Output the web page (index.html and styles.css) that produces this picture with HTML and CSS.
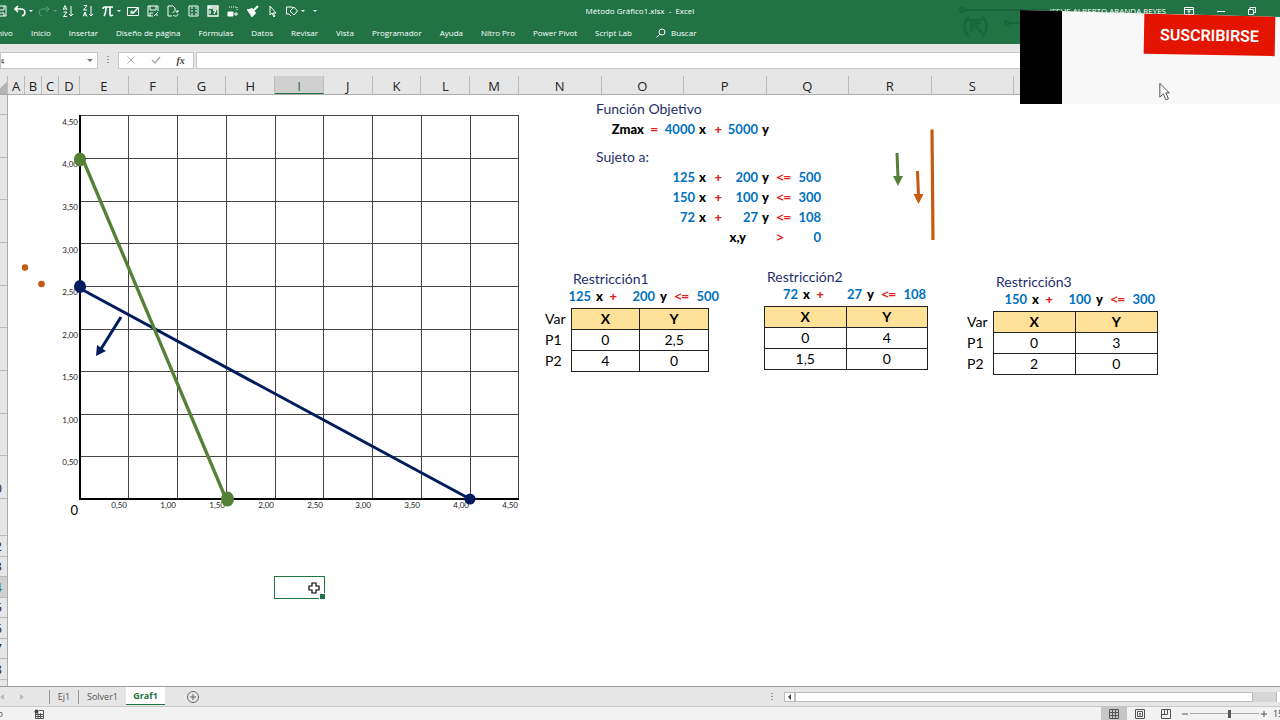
FILE: index.html
```html
<!DOCTYPE html>
<html lang="es">
<head>
    <meta charset="UTF-8" />
    <meta name="viewport" content="width=device-width, initial-scale=1" />
    <title>Método Gráfico1.xlsx - Excel</title>
    <link rel="stylesheet" href="styles.css">
</head>
<body>
    <header class="ribbon">
        <svg class="circuit" width="100" height="44" viewBox="0 0 100 44" aria-hidden="true">
            <g fill="none" stroke="#185c37" stroke-width="2">
                <circle cx="7" cy="10" r="2" /><path d="M9 10h90" />
                <circle cx="52" cy="23" r="2" /><path d="M54 23h46" />
                <path stroke-width="2.500" d="M14 17a12 12 0 0 0 0 19M27 17a12 12 0 0 1 0 19M16 21v11M27 33l-9-10M18 31v-8h8M13 20h14" />
            </g>
        </svg>
        <div class="title-row">
            <div class="qat">
                <button aria-label="Guardar"><svg width="12" height="12" viewBox="0 0 12 12"><path d="M1 1h10v10H1zM3 1v4h6V1M3 11V8h6v3" /></svg></button>
                <button class="split" aria-label="Deshacer"><svg width="12" height="12" viewBox="0 0 12 12"><path stroke-width="1.6" d="M4 1L1 4l3 3M1 4h6c5 0 5 6 1 7" /></svg><i class="caret"></i></button>
                <button class="split dim" aria-label="Rehacer"><svg width="12" height="12" viewBox="0 0 12 12"><path d="M8 1l3 3-3 3M11 4H5C0 4 0 10 4 11" /></svg><i class="caret"></i></button>
                <button aria-label="Orden ascendente"><svg width="12" height="12" viewBox="0 0 12 12"><path d="M0 5l2-4.500L4 5M1 4h2M.5 7H4L.5 11.500H4M8 1v10M6 9l2 2 2-2" /></svg></button>
                <button aria-label="Orden descendente"><svg width="12" height="12" viewBox="0 0 12 12"><path d="M.5.500H4L.5 5H4M0 11.500L2 7l2 4.500M1 10h2M8 1v10M6 9l2 2 2-2" /></svg></button>
                <button class="split" aria-label="Ecuación"><svg width="12" height="12" viewBox="0 0 12 12"><path stroke-width="1.6" d="M1 4c0-2 1-2 2-2h8M4 2c0 4 0 6-2 9M8 2v7c0 2 1 2 3 1" /></svg><i class="caret"></i></button>
                <button aria-label="Casilla"><svg width="12" height="12" viewBox="0 0 12 12"><path d="M.5 2.500h11v8H.5zM3 8h2" /><path stroke-width="1.6" d="M4 6l2 2 5-5" /></svg></button>
                <button aria-label="Guardar como"><svg width="12" height="12" viewBox="0 0 12 12"><path d="M6 11H1V1h10v5M3 1v4h6V1M3 11V8h3M7 11l4-4M10 9v2" /></svg></button>
                <button aria-label="Actualizar"><svg width="12" height="12" viewBox="0 0 12 12"><path d="M5 11H1V1h5l2 2v2M11 7c-2-2-5-1-5 1M11 5v2H9M6 10c2 2 5 1 5-1" /></svg></button>
                <button aria-label="Formulario"><svg width="12" height="12" viewBox="0 0 12 12"><path d="M2 1h9v10H2zM4 3h2M8 3h2M4 6h2M8 6h2M4 9h2M8 9h2" /></svg></button>
                <button aria-label="Calendario"><svg width="12" height="12" viewBox="0 0 12 12"><path d="M1 1h10v10H1zM1 3h10M3 5v4M6 5h3L7 9M3 3v-2" stroke-width="1.3" /></svg></button>
                <button aria-label="Cámara"><svg width="12" height="12" viewBox="0 0 12 12"><path stroke-dasharray="1 1" d="M2 2h8v4" /><path fill="#fff" d="M1 7h5v4H1z" /><path d="M9 7v4M7 9h4" /></svg></button>
                <button aria-label="Copiar formato"><svg width="12" height="12" viewBox="0 0 12 12"><path fill="#fff" d="M1 5l4-1 3 4-3 3zM7 5l4-4" stroke-width="1.8" /></svg></button>
                <button aria-label="Seleccionar"><svg width="12" height="12" viewBox="0 0 12 12"><path d="M3 1v9l2-2 2 4 1-1-2-3h3z" /></svg></button>
                <button class="split" aria-label="Formas"><svg width="12" height="12" viewBox="0 0 12 12"><path d="M3 9H.5V2h6v2M8 2l3.500 4L8 10 4 6zM3 9l2 2" /></svg><i class="caret"></i></button>
                <button class="more" aria-label="Personalizar"><i class="caret"></i></button>
            </div>
            <div class="doc-title">Método Gráfico1.xlsx&nbsp; -&nbsp; Excel</div>
            <div class="window-tools">
                <span class="user">JESUS ALBERTO ARANDA REYES</span>
                <button aria-label="Opciones de cinta"><svg width="10" height="8" viewBox="0 0 10 8"><path d="M.5.500h9v7h-9zM.5 2.500h9M5 6.500v-3M3.500 5L5 3.500 6.500 5" /></svg></button>
                <button aria-label="Minimizar"><svg width="8" height="8" viewBox="0 0 8 8"><path d="M0 4.500h8" /></svg></button>
                <button aria-label="Restaurar"><svg width="8" height="8" viewBox="0 0 8 8"><path d="M.5 2.500h5v5h-5zM2 2.500v-2h5.500v5h-2" /></svg></button>
            </div>
        </div>
        <nav class="tabs">
            <a href="#">Archivo</a>
            <a href="#">Inicio</a>
            <a href="#">Insertar</a>
            <a href="#">Diseño de página</a>
            <a href="#">Fórmulas</a>
            <a href="#">Datos</a>
            <a href="#">Revisar</a>
            <a href="#">Vista</a>
            <a href="#">Programador</a>
            <a href="#">Ayuda</a>
            <a href="#">Nitro Pro</a>
            <a href="#">Power Pivot</a>
            <a href="#">Script Lab</a>
            <a href="#" class="search"><svg width="10" height="10" viewBox="0 0 10 10"><circle cx="6" cy="4" r="3" /><path d="M4 6L.5 9.500" /></svg>Buscar</a>
        </nav>
    </header>

    <div class="formula-bar">
        <div class="name-box">
            <input type="text" value="I14" aria-label="Cuadro de nombres" />
            <i class="caret"></i>
        </div>
        <i class="dots"></i>
        <div class="fx-box">
            <button aria-label="Cancelar"><svg width="10" height="10" viewBox="0 0 10 10"><path stroke="#aaa" d="M1.500 1.500l7 7M8.500 1.500l-7 7" /></svg></button>
            <button aria-label="Introducir"><svg width="10" height="10" viewBox="0 0 10 10"><path stroke="#aaa" stroke-width="1.500" d="M1 5l3 3 5-6" /></svg></button>
            <button class="fx" aria-label="Insertar función">fx</button>
        </div>
        <input class="formula" type="text" aria-label="Barra de fórmulas" />
    </div>

    <div class="col-heads">
        <span class="corner"></span>
        <span class="a">A</span><span class="b">B</span><span class="b">C</span><span class="d">D</span>
        <div class="cols chart-cols">
            <span>E</span><span>F</span><span>G</span><span>H</span><span class="active">I</span><span>J</span><span>K</span><span>L</span><span>M</span>
        </div>
        <div class="cols wide-cols">
            <span>N</span><span>O</span><span>P</span><span>Q</span><span>R</span><span>S</span>
        </div>
        <span class="rest"></span>
    </div>

    <main class="sheet">
        <div class="row-heads">
            <span class="first"></span>
            <div class="tall-rows">
                <span></span><span></span><span></span><span></span><span></span><span></span><span></span><span></span><span>10</span>
            </div>
            <span class="spacer"></span>
            <div class="short-rows">
                <span>12</span><span>13</span><span class="active">14</span><span>15</span><span>16</span><span>17</span><span>18</span>
            </div>
        </div>

        <div class="cells">
            <svg class="chart" width="512" height="430" viewBox="8 95 512 430" role="img" aria-label="Gráfico de restricciones">
                <path class="gridlines" d="M80 115.500H519M80 158.500H519M80 201.500H519M80 243.500H519M80 286.500H519M80 329.500H519M80 371.500H519M80 414.500H519M80 456.500H519
                    M128.500 115V499M177.500 115V499M226.500 115V499M275.500 115V499M323.500 115V499M372.500 115V499M421.500 115V499M470.500 115V499M518.500 115V499" />
                <path class="axes" d="M80 115V499H519" />
                <g class="ticks">
                    <text x="78" y="125">4,50</text>
                    <text x="78" y="167">4,00</text>
                    <text x="78" y="210">3,50</text>
                    <text x="78" y="253">3,00</text>
                    <text x="78" y="295">2,50</text>
                    <text x="78" y="338">2,00</text>
                    <text x="78" y="380">1,50</text>
                    <text x="78" y="423">1,00</text>
                    <text x="78" y="465">0,50</text>
                    <text x="127" y="508">0,50</text>
                    <text x="176" y="508">1,00</text>
                    <text x="225" y="508">1,50</text>
                    <text x="274" y="508">2,00</text>
                    <text x="323" y="508">2,50</text>
                    <text x="371" y="508">3,00</text>
                    <text x="420" y="508">3,50</text>
                    <text x="469" y="508">4,00</text>
                    <text x="518" y="508">4,50</text>
                </g>
                <text class="origin" x="78" y="515">0</text>
                <!-- restricción 1 -->
                <g stroke="#001c5c" fill="#001c5c" stroke-width="3">
                    <path d="M81 289L470 499" />
                    <ellipse cx="80" cy="286.500" rx="6" ry="6.500" stroke="none" />
                    <circle cx="470" cy="499" r="5.500" stroke="none" />
                    <path d="M121 317L101 349" />
                    <path stroke="none" d="M96 356L97 345L106 351z" />
                </g>
                <!-- restricción 2 -->
                <g stroke="#538135" fill="#538135" stroke-width="3.300">
                    <path d="M84 162L226 499" />
                    <ellipse cx="80" cy="159.500" rx="6" ry="7" stroke="none" />
                    <ellipse cx="227.500" cy="499" rx="6.500" ry="7.500" stroke="none" />
                </g>
                <circle cx="25" cy="267.500" r="3.200" fill="#c55a11" />
                <circle cx="41.500" cy="284" r="3.300" fill="#c55a11" />
            </svg>

            <div class="model">
                <div class="problem">
                    <div class="statement">
                        <h2>Función Objetivo</h2>
                        <div class="eq">
                            <b>Zmax</b><em>=</em><span>4000</span><b>x</b><em>+</em><span>5000</span><b>y</b>
                        </div>
                        <h2 class="subject">Sujeto a:</h2>
                        <div class="eq">
                            <b></b><em></em><span>125</span><b>x</b><em>+</em><span>200</span><b>y</b><em>&lt;=</em><span>500</span>
                            <b></b><em></em><span>150</span><b>x</b><em>+</em><span>100</span><b>y</b><em>&lt;=</em><span>300</span>
                            <b></b><em></em><span>72</span><b>x</b><em>+</em><span>27</span><b>y</b><em>&lt;=</em><span>108</span>
                            <b class="both">x,y</b><em class="gt">&gt;</em><span>0</span>
                        </div>
                    </div>
                    <svg class="arrows" width="60" height="120" viewBox="885 125 60 120" aria-hidden="true">
                        <path stroke="#538135" stroke-width="3" d="M897 153L898 178" />
                        <path fill="#538135" d="M893 176L903 176L898 186z" />
                        <path stroke="#c55a11" stroke-width="3" d="M917.500 171L918.500 196" />
                        <path fill="#c55a11" d="M913.500 194L923.500 194L918.500 204z" />
                        <path stroke="#c55a11" stroke-width="3.200" d="M932 129.500L933 240" />
                    </svg>
                </div>

                <div class="restrictions">
                    <section class="restriction r1">
                        <h2>Restricción1</h2>
                        <div class="eq short"><span>125</span><b>x</b><em>+</em><span>200</span><b>y</b><em>&lt;=</em><span>500</span></div>
                        <table>
                            <tr><th class="label">Var</th><th>X</th><th>Y</th></tr>
                            <tr><th class="label">P1</th><td>0</td><td>2,5</td></tr>
                            <tr><th class="label">P2</th><td>4</td><td>0</td></tr>
                        </table>
                    </section>
                    <section class="restriction r2">
                        <h2>Restricción2</h2>
                        <div class="eq short"><span>72</span><b>x</b><em>+</em><span>27</span><b>y</b><em>&lt;=</em><span>108</span></div>
                        <table>
                            <tr><th>X</th><th>Y</th></tr>
                            <tr><td>0</td><td>4</td></tr>
                            <tr><td>1,5</td><td>0</td></tr>
                        </table>
                    </section>
                    <section class="restriction r3">
                        <h2>Restricción3</h2>
                        <div class="eq short"><span>150</span><b>x</b><em>+</em><span>100</span><b>y</b><em>&lt;=</em><span>300</span></div>
                        <table>
                            <tr><th class="label">Var</th><th>X</th><th>Y</th></tr>
                            <tr><th class="label">P1</th><td>0</td><td>3</td></tr>
                            <tr><th class="label">P2</th><td>2</td><td>0</td></tr>
                        </table>
                    </section>
                </div>
            </div>

            <div class="selection">
                <svg width="12" height="12" viewBox="0 0 12 12"><path fill="#fff" stroke="#000" stroke-width="1.200" d="M4 1h4v3h3v4H8v3H4V8H1V4h3z" /></svg>
            </div>
        </div>
    </main>

    <div class="sheet-bar">
        <div class="sheet-nav">
            <button aria-label="Hoja anterior"><svg width="4" height="6" viewBox="0 0 4 6"><path fill="#bbb" d="M4 0v6L0 3z" /></svg></button>
            <button aria-label="Hoja siguiente"><svg width="4" height="6" viewBox="0 0 4 6"><path fill="#bbb" d="M0 0v6l4-3z" /></svg></button>
        </div>
        <button class="sheet-tab ej">Ej1</button>
        <button class="sheet-tab solver">Solver1</button>
        <button class="sheet-tab current">Graf1</button>
        <button class="add" aria-label="Hoja nueva"><svg width="12" height="12" viewBox="0 0 12 12"><path fill="none" stroke="#666" d="M6 3v6M3 6h6M6 .5a5.500 5.500 0 1 0 .01 0z" /></svg></button>
        <i class="dots"></i>
        <div class="scroll">
            <button aria-label="Desplazar a la izquierda"><svg width="4" height="6" viewBox="0 0 4 6"><path fill="#444" d="M3 0v6L0 3z" /></svg></button>
            <div class="thumb"></div>
            <div class="track"></div>
            <div class="end"></div>
        </div>
    </div>

    <footer class="status">
        <span class="mode">Listo</span>
        <svg class="macro" width="10" height="10" viewBox="0 0 10 10"><path fill="none" stroke="#555" d="M1.500 4v5.500h8v-8H5M2 5.500h7M2 7.500h7M4 4v5M6.500 4v5" /><circle cx="2.500" cy="2.500" r="2" fill="#444" /></svg>
        <div class="views">
            <button class="on" aria-label="Normal"><svg width="10" height="10" viewBox="0 0 10 10"><path d="M.5.500h9v9h-9zM.5 3.500h9M.5 6.500h9M3.500.500v9M6.500.500v9" /></svg></button>
            <button aria-label="Diseño de página"><svg width="10" height="10" viewBox="0 0 10 10"><path d="M.5.500h9v9h-9zM2.500 2.500h5v5h-5zM4 4.500h2M4 6h2" /></svg></button>
            <button aria-label="Saltos de página"><svg width="10" height="10" viewBox="0 0 10 10"><path d="M.5.500h9v9h-9zM.5 5.500h6v-5M3.500.500v5" /></svg></button>
        </div>
        <div class="zoom">
            <button aria-label="Alejar"><svg width="6" height="6" viewBox="0 0 6 6"><path d="M0 3h6" /></svg></button>
            <input type="range" min="0" max="100" value="58" aria-label="Zoom" />
            <button aria-label="Acercar"><svg width="6" height="6" viewBox="0 0 6 6"><path d="M0 3h6M3 0v6" /></svg></button>
            <span>150%</span>
        </div>
    </footer>

    <aside class="subscribe">
        <div class="strip"></div>
        <button>SUSCRIBIRSE</button>
        <svg class="pointer" width="12" height="20" viewBox="0 0 14 22"><path fill="#fff" stroke="#333" d="M1 1v16l4-4 3 7 3-1-3-7h4z" /></svg>
    </aside>
</body>
</html>
```
FILE: styles.css
```css
* { box-sizing: border-box; }
body {
    margin: 0; height: 100vh; display: flex; flex-direction: column; overflow: hidden;
    position: relative; background: #fff; font-family: "Open Sans", "Noto Sans", sans-serif; font-size: 8px;
}
button { background: none; border: none; padding: 0; margin: 0; font: inherit; color: inherit; display: flex; align-items: center; justify-content: center; }
input { border: none; padding: 0; margin: 0; font: inherit; background: none; }
svg { display: block; flex: none; }
a { color: inherit; text-decoration: none; }
h2 { margin: 0; font-size: 14px; font-weight: 400; line-height: 20px; color: #1f2f6b; }
.caret { border: 3px solid transparent; border-top-color: currentColor; border-bottom: none; }

/* ribbon */
.ribbon { position: relative; background: #217346; color: #fff; height: 44px; flex: none; overflow: hidden; }
.ribbon svg { fill: none; stroke: #fff; }
.ribbon .circuit { position: absolute; right: 225px; top: 0; opacity: 0.6; }
.title-row { display: grid; grid-template-columns: 1fr auto 1fr; align-items: center; height: 21px; position: relative; }
.qat { display: flex; margin-left: -9px; }
.qat button { width: 20px; height: 21px; flex: none; }
.qat .split { width: 24px; gap: 3px; }
.qat .more { width: 16px; }
.qat .caret { border-width: 2px; border-bottom: none; }
.qat .dim { opacity: 0.3; }
.window-tools { display: flex; align-items: center; justify-content: flex-end; padding-right: 24px; gap: 23px; }
.user { white-space: nowrap; margin-right: -5px; line-height: 8px; }
.tabs { display: flex; align-items: center; gap: 18px; height: 23px; margin-left: -15px; position: relative; white-space: nowrap; }
.search { display: flex; align-items: center; gap: 5px; margin-left: 6px; }

/* formula bar */
.formula-bar { display: flex; align-items: center; background: #e6e6e6; height: 32px; flex: none; }
.name-box { display: flex; align-items: center; width: 98px; height: 17px; background: #fff; border: 1px solid #c6c6c6; padding-right: 4px; overflow: hidden; }
.name-box input { flex: 1; min-width: 0; margin-left: -8px; color: #333; }
.name-box .caret { color: #777; }
.dots { width: 2px; height: 8px; margin: 0 9px; background: repeating-linear-gradient(#999 0 1px, transparent 1px 3px); }
.fx-box { display: flex; width: 76px; height: 17px; background: #fff; border: 1px solid #c6c6c6; }
.fx-box button { flex: 1; }
.fx-box svg { fill: none; }
.fx-box .fx { font: italic bold 10px "Liberation Serif", serif; color: #444; }
.formula { flex: 1; min-width: 0; height: 17px; margin-left: 2px; background: #fff; border: 1px solid #c6c6c6; }

/* headers */
.col-heads { display: flex; background: #e6e6e6; border-bottom: 1px solid #ababab; height: 19px; flex: none; font-size: 13px; line-height: 21px; text-align: center; color: #222; }
.col-heads span { border-right: 1px solid #bbb; overflow: hidden; }
.col-heads .corner { width: 8px; background: linear-gradient(135deg, transparent 50%, #b4b4b4 50%); }
.a, .b { width: 17px; }
.d { width: 21px; }
.cols { display: flex; }
.cols span { flex: 1; }
.chart-cols { width: 439px; }
.wide-cols { width: 495px; }
.rest { flex: 1; }
.col-heads .active { background: #d0d0d0; border-bottom: 1px solid #217346; color: #217346; }
.sheet { display: flex; flex: 1; min-height: 0; overflow: hidden; }
.row-heads { width: 8px; flex: none; background: #e6e6e6; border-right: 1px solid #ababab; overflow: hidden; font-size: 13px; line-height: 20px; color: #222; }
.row-heads span { display: flex; justify-content: flex-end; align-items: flex-end; padding-right: 5px; border-bottom: 1px solid #bbb; overflow: hidden; }
.tall-rows, .short-rows { display: flex; flex-direction: column; }
.tall-rows { height: 384px; }
.short-rows { height: 144px; }
.tall-rows span, .short-rows span { flex: 1; min-height: 0; }
.row-heads .first { height: 20px; }
.row-heads .spacer { height: 37px; }
.row-heads .active { background: #d0d0d0; color: #217346; }

/* worksheet */
.cells { position: relative; display: flex; flex: 1; font-family: Lato, "Open Sans", sans-serif; }
.chart { font-family: Lato, sans-serif; }
.gridlines { fill: none; stroke: #444; }
.axes { fill: none; stroke: #000; stroke-width: 2; }
.ticks { font-size: 8px; text-anchor: end; fill: #222; }
.origin { font-size: 13px; text-anchor: end; }
.model { padding-top: 4px; flex: 1; }
.problem { display: flex; padding-left: 76px; }
.statement { width: 289px; }
.subject { margin-top: 8px; }
.arrows { margin-top: 26px; }
.eq { display: grid; grid-template-columns: 48px 14px 37px 11px 16px 36px 11px 22px 30px; font-size: 13px; line-height: 20px; font-weight: 700; text-align: right; white-space: nowrap; }
.eq.short { grid-template-columns: 22px 12px 14px 38px 12px 22px 30px; width: 150px; line-height: 16px; }
.eq em { color: #e02020; font-style: normal; font-family: "Open Sans", sans-serif; }
.eq span { color: #0070c0; display: flex; justify-content: flex-end; }
.both { grid-column: 1 / 7; padding-right: 12px; }
.eq .gt { grid-column: 7 / 9; padding-right: 7px; }
.restrictions { display: flex; align-items: flex-start; padding: 20px 0 0 25px; }
.r1 { padding-top: 2px; }
.r1 h2 { padding-left: 28px; }
.r1 .eq { margin-left: 24px; }
.r2 { margin-left: 55px; }
.r2 h2 { padding-left: 3px; }
.r2 .eq { margin-left: 12px; }
.r3 { margin-left: 39px; padding-top: 5px; }
.r3 h2 { padding-left: 29px; }
.r3 .eq { margin-left: 38px; }
.restriction { width: 164px; }
.restriction h2 { line-height: 19px; }
.restriction.r3 { width: 191px; }
table { border-collapse: collapse; width: 100%; table-layout: fixed; margin-top: 4px; font-size: 14px; line-height: 20px; text-align: center; }
th, td { border: 1px solid #222; padding: 0; }
th { background: #ffe299; }
.label { width: 26px; border: none; background: none; font-weight: 400; text-align: left; }
.selection { position: absolute; left: 266px; top: 481px; width: 51px; height: 23px; border: 1px solid #217346; display: flex; align-items: center; justify-content: flex-end; padding-right: 4px; }
.selection::after { content: ""; position: absolute; right: -2px; bottom: -2px; width: 5px; height: 5px; background: #217346; border: 1px solid #fff; }

/* sheet tabs */
.sheet-bar { display: flex; align-items: center; height: 20px; flex: none; background: #e6e6e6; border-top: 1px solid #9a9a9a; color: #555; font-size: 9px; }
.sheet-nav { display: flex; gap: 16px; width: 49px; }
.sheet-tab { height: 14px; border-left: 1px solid #999; }
.ej { width: 29px; }
.solver { width: 48px; }
.current { align-self: flex-start; width: 39px; height: 18px; background: #fff; color: #217346; font-weight: 700; border-left: none; border-bottom: 1px solid #217346; }
.add { margin-left: 22px; }
.sheet-bar .dots { margin-left: auto; margin-right: 11px; }
.scroll { display: flex; width: 496px; height: 10px; background: #d6d6d6; }
.scroll button { width: 11px; background: #fff; border: 1px solid #bbb; }
.thumb { width: 458px; background: #fff; border: 1px solid #bbb; }
.track { flex: 1; }
.end { width: 4px; background: #fff; border-left: 1px solid #bbb; }

/* status bar */
.status { display: flex; align-items: center; height: 14px; flex: none; background: #f2f2f2; border-top: 1px solid #c8c8c8; color: #444; font-size: 9px; overflow: hidden; white-space: nowrap; }
.mode { width: 20px; margin-left: -17px; }
.macro { margin-left: 31px; }
.status button svg { fill: none; stroke: #555; }
.views { display: flex; margin-left: auto; }
.views button { width: 26px; height: 14px; }
.views .on { background: #c6c6c6; }
.zoom { display: flex; align-items: center; width: 101px; gap: 2px; padding-left: 3px; }
.zoom button { flex: none; }
.zoom input { -webkit-appearance: none; appearance: none; width: 69px; height: 12px; flex: none; background: linear-gradient(#aaa, #aaa) center / 100% 1px no-repeat; }
.zoom input::-webkit-slider-thumb { -webkit-appearance: none; width: 3px; height: 8px; background: #555; }
.zoom span { padding-left: 4px; }

/* subscribe card over the sheet */
.subscribe { position: absolute; right: 0; top: 10px; width: 260px; height: 94px; display: flex; background: #f8f8f8; clip-path: polygon(0 0, 100% 7px, 100% 100%, 0 100%); }
.strip { width: 42px; background: #000; }
.subscribe button { margin: 5px 5px 0 auto; width: 131px; height: 40px; background: #e31400; color: #fff; font: 600 16px Roboto, sans-serif; transform: rotate(1deg); }
.pointer { position: absolute; left: 139px; top: 72px; }
```
